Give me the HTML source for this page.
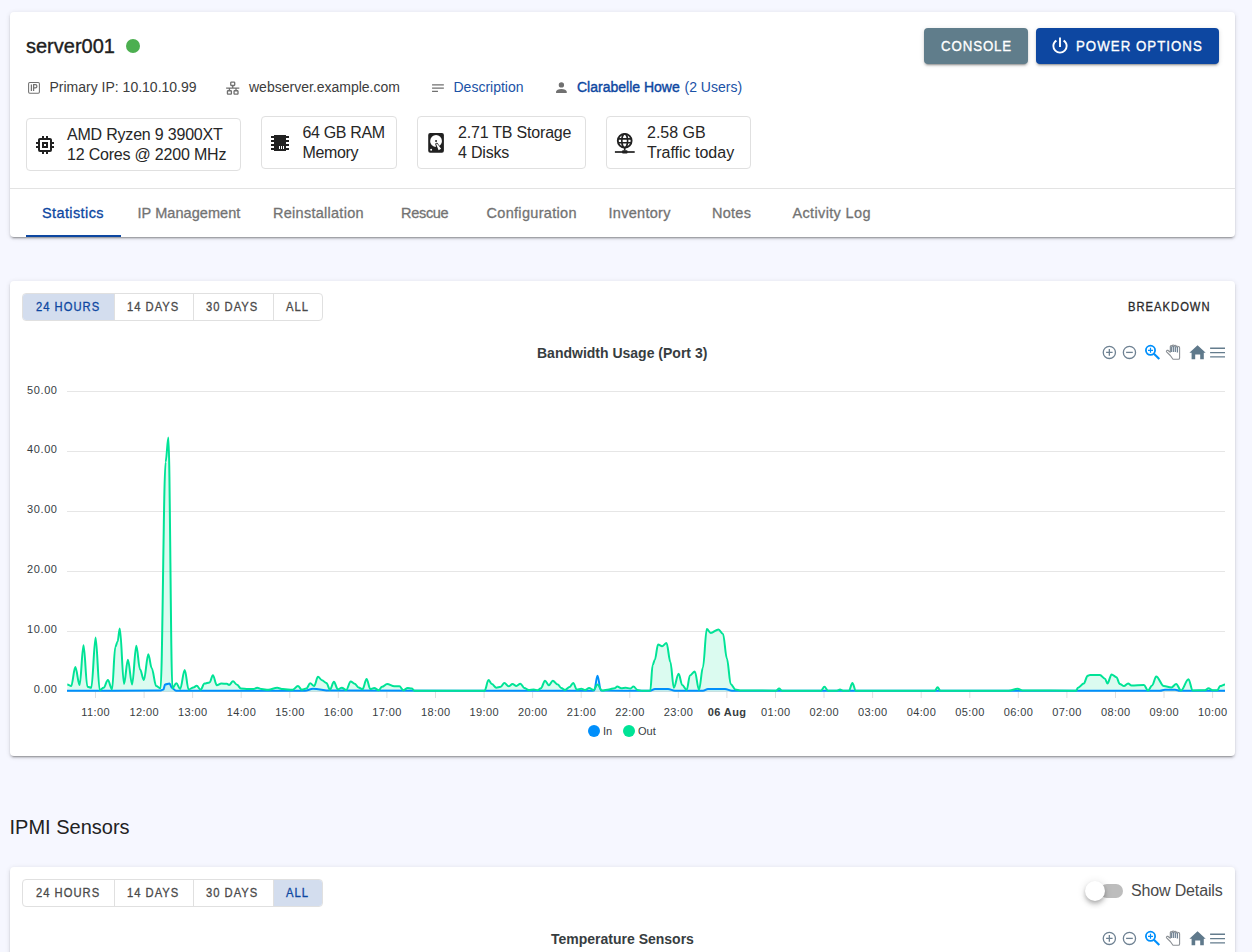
<!DOCTYPE html>
<html><head><meta charset="utf-8">
<style>
html,body{margin:0;padding:0}
body{width:1252px;height:952px;overflow:hidden;position:relative;background:#f6f7ff;font-family:"Liberation Sans",sans-serif;color:#212121}
.card{position:absolute;background:#fff;border-radius:4px;box-shadow:0 3px 1px -2px rgba(0,0,0,.2),0 2px 2px 0 rgba(0,0,0,.14),0 1px 5px 0 rgba(0,0,0,.12)}
.t{position:absolute;line-height:1;white-space:nowrap}
.ic{position:absolute}
.box{position:absolute;border:1px solid #e0e0e0;border-radius:4px;box-sizing:border-box;background:#fff}
.tab{position:absolute;top:206px;font-size:14.5px;color:#737373;line-height:1;white-space:nowrap;-webkit-text-stroke:0.3px currentColor}
.btn{position:absolute;border-radius:4px;color:#fff;box-shadow:0 3px 1px -2px rgba(0,0,0,.2),0 2px 2px 0 rgba(0,0,0,.14),0 1px 5px 0 rgba(0,0,0,.12)}
.grp{position:absolute;border:1px solid #e0e0e0;border-radius:4px;box-sizing:border-box;overflow:hidden}
.gb{position:absolute;top:0;bottom:0;box-sizing:border-box}
.gt{position:absolute;font-size:12px;letter-spacing:1.07px;line-height:1;white-space:nowrap;color:#4a4a4a;-webkit-text-stroke:0.3px currentColor;transform:scaleX(0.935);transform-origin:0 0}
</style></head>
<body>
<!-- CARD 1 -->
<div class="card" style="left:10px;top:12px;width:1225px;height:225px"></div>
<div class="t" style="left:26px;top:36px;font-size:20px;color:#202020;-webkit-text-stroke:0.35px currentColor">server001</div>
<div class="ic" style="left:126px;top:39px;width:14px;height:14px;border-radius:50%;background:#4caf50"></div>

<div class="btn" style="left:924px;top:28px;width:104px;height:36px;background:#607d8b"></div>
<div class="t" style="left:941px;top:38.3px;font-size:15px;letter-spacing:1.0px;color:#fff;-webkit-text-stroke:0.35px #fff;transform:scaleX(0.885);transform-origin:0 0">CONSOLE</div>
<div class="btn" style="left:1036px;top:28px;width:183px;height:36px;background:#0d47a1"></div>
<div class="t" style="left:1076px;top:38.3px;font-size:15px;letter-spacing:1.15px;color:#fff;-webkit-text-stroke:0.35px #fff;transform:scaleX(0.885);transform-origin:0 0">POWER OPTIONS</div>

<div class="t" style="left:49.5px;top:80px;font-size:14px;color:#3c3c3c">Primary IP: 10.10.10.99</div>
<div class="t" style="left:249px;top:80px;font-size:14px;color:#3c3c3c">webserver.example.com</div>
<div class="t" style="left:453.5px;top:80px;font-size:14px;color:#1a52a6">Description</div>
<div class="t" style="left:577px;top:80px;font-size:14px;color:#0d47a1;-webkit-text-stroke:0.4px currentColor">Clarabelle Howe</div>
<div class="t" style="left:684.5px;top:80px;font-size:14px;color:#1a52a6">(2 Users)</div>

<div class="box" style="left:26px;top:118px;width:215px;height:53px"></div>
<div class="t" style="left:67px;top:125px;font-size:16px;color:#262626;line-height:20px;letter-spacing:-0.2px">AMD Ryzen 9 3900XT<br>12 Cores @ 2200 MHz</div>
<div class="box" style="left:261px;top:116px;width:136px;height:53px"></div>
<div class="t" style="left:302.5px;top:123px;font-size:16px;color:#262626;line-height:20px;letter-spacing:-0.35px">64 GB RAM<br>Memory</div>
<div class="box" style="left:417px;top:116px;width:169px;height:53px"></div>
<div class="t" style="left:458px;top:123px;font-size:16px;color:#262626;line-height:20px;letter-spacing:-0.2px">2.71 TB Storage<br>4 Disks</div>
<div class="box" style="left:606px;top:116px;width:145px;height:53px"></div>
<div class="t" style="left:647px;top:123px;font-size:16px;color:#262626;line-height:20px">2.58 GB<br>Traffic today</div>

<div class="ic" style="left:10px;top:188px;width:1225px;height:1px;background:#e3e3e3"></div>
<div class="tab" style="left:42px;color:#0d47a1;letter-spacing:0.39px">Statistics</div>
<div class="ic" style="left:26px;top:235px;width:95px;height:2px;background:#0d47a1"></div>
<div class="tab" style="left:137.5px;letter-spacing:0.06px">IP Management</div>
<div class="tab" style="left:273px;letter-spacing:0.27px">Reinstallation</div>
<div class="tab" style="left:401px;letter-spacing:-0.3px">Rescue</div>
<div class="tab" style="left:486.5px;letter-spacing:0.31px">Configuration</div>
<div class="tab" style="left:608.5px;letter-spacing:0.29px">Inventory</div>
<div class="tab" style="left:712px;letter-spacing:0.27px">Notes</div>
<div class="tab" style="left:792.5px;letter-spacing:0.35px">Activity Log</div>

<!-- CARD 2 -->
<div class="card" style="left:10px;top:281px;width:1225px;height:475px"></div>
<div class="grp" style="left:22px;top:293px;width:301px;height:28px">
  <div class="gb" style="left:0;width:92px;background:#d3ddee"></div>
  <div class="gb" style="left:91px;width:80px;border-left:1px solid #e0e0e0"></div>
  <div class="gb" style="left:170px;width:80px;border-left:1px solid #e0e0e0"></div>
  <div class="gb" style="left:250px;width:50px;border-left:1px solid #e0e0e0"></div>
</div>
<div class="gt" style="left:36px;top:301px;color:#0d47a1">24 HOURS</div>
<div class="gt" style="left:127px;top:301px">14 DAYS</div>
<div class="gt" style="left:206px;top:301px">30 DAYS</div>
<div class="gt" style="left:286px;top:301px">ALL</div>
<div class="gt" style="left:1128px;top:301px;color:#2a2a2a">BREAKDOWN</div>

<div class="t" style="left:537px;top:345.5px;font-size:14px;font-weight:bold;color:#373d3f">Bandwidth Usage (Port 3)</div>

<!-- CHART -->
<svg class="ic" style="left:0;top:0;font-family:'Liberation Sans',sans-serif" width="1252" height="952" id="chart"><line x1="67" y1="391.5" x2="1225" y2="391.5" stroke="#e6e6e6" stroke-width="1"/><line x1="67" y1="451.5" x2="1225" y2="451.5" stroke="#e6e6e6" stroke-width="1"/><line x1="67" y1="511.5" x2="1225" y2="511.5" stroke="#e6e6e6" stroke-width="1"/><line x1="67" y1="571.5" x2="1225" y2="571.5" stroke="#e6e6e6" stroke-width="1"/><line x1="67" y1="631.5" x2="1225" y2="631.5" stroke="#e6e6e6" stroke-width="1"/><line x1="67" y1="691.5" x2="1225" y2="691.5" stroke="#e6e6e6" stroke-width="1"/><text x="57.6" y="393.6" text-anchor="end" font-size="11" fill="#373d3f" letter-spacing="0.6">50.00</text><text x="57.6" y="452.9" text-anchor="end" font-size="11" fill="#373d3f" letter-spacing="0.6">40.00</text><text x="57.6" y="512.8" text-anchor="end" font-size="11" fill="#373d3f" letter-spacing="0.6">30.00</text><text x="57.6" y="572.6" text-anchor="end" font-size="11" fill="#373d3f" letter-spacing="0.6">20.00</text><text x="57.6" y="632.8" text-anchor="end" font-size="11" fill="#373d3f" letter-spacing="0.6">10.00</text><text x="57.6" y="692.6" text-anchor="end" font-size="11" fill="#373d3f" letter-spacing="0.6">0.00</text><line x1="95.5" y1="692" x2="95.5" y2="698" stroke="#e0e0e0"/><text x="95.7" y="715.5" text-anchor="middle" font-size="11" fill="#373d3f" letter-spacing="0.4">11:00</text><line x1="144.1" y1="692" x2="144.1" y2="698" stroke="#e0e0e0"/><text x="144.3" y="715.5" text-anchor="middle" font-size="11" fill="#373d3f" letter-spacing="0.4">12:00</text><line x1="192.6" y1="692" x2="192.6" y2="698" stroke="#e0e0e0"/><text x="192.8" y="715.5" text-anchor="middle" font-size="11" fill="#373d3f" letter-spacing="0.4">13:00</text><line x1="241.2" y1="692" x2="241.2" y2="698" stroke="#e0e0e0"/><text x="241.4" y="715.5" text-anchor="middle" font-size="11" fill="#373d3f" letter-spacing="0.4">14:00</text><line x1="289.8" y1="692" x2="289.8" y2="698" stroke="#e0e0e0"/><text x="290.0" y="715.5" text-anchor="middle" font-size="11" fill="#373d3f" letter-spacing="0.4">15:00</text><line x1="338.3" y1="692" x2="338.3" y2="698" stroke="#e0e0e0"/><text x="338.5" y="715.5" text-anchor="middle" font-size="11" fill="#373d3f" letter-spacing="0.4">16:00</text><line x1="386.9" y1="692" x2="386.9" y2="698" stroke="#e0e0e0"/><text x="387.1" y="715.5" text-anchor="middle" font-size="11" fill="#373d3f" letter-spacing="0.4">17:00</text><line x1="435.5" y1="692" x2="435.5" y2="698" stroke="#e0e0e0"/><text x="435.7" y="715.5" text-anchor="middle" font-size="11" fill="#373d3f" letter-spacing="0.4">18:00</text><line x1="484.1" y1="692" x2="484.1" y2="698" stroke="#e0e0e0"/><text x="484.3" y="715.5" text-anchor="middle" font-size="11" fill="#373d3f" letter-spacing="0.4">19:00</text><line x1="532.6" y1="692" x2="532.6" y2="698" stroke="#e0e0e0"/><text x="532.8" y="715.5" text-anchor="middle" font-size="11" fill="#373d3f" letter-spacing="0.4">20:00</text><line x1="581.2" y1="692" x2="581.2" y2="698" stroke="#e0e0e0"/><text x="581.4" y="715.5" text-anchor="middle" font-size="11" fill="#373d3f" letter-spacing="0.4">21:00</text><line x1="629.8" y1="692" x2="629.8" y2="698" stroke="#e0e0e0"/><text x="630.0" y="715.5" text-anchor="middle" font-size="11" fill="#373d3f" letter-spacing="0.4">22:00</text><line x1="678.3" y1="692" x2="678.3" y2="698" stroke="#e0e0e0"/><text x="678.5" y="715.5" text-anchor="middle" font-size="11" fill="#373d3f" letter-spacing="0.4">23:00</text><line x1="726.9" y1="692" x2="726.9" y2="698" stroke="#e0e0e0"/><text x="727.1" y="715.5" text-anchor="middle" font-size="11" fill="#373d3f" letter-spacing="0.4" font-weight="bold">06 Aug</text><line x1="775.5" y1="692" x2="775.5" y2="698" stroke="#e0e0e0"/><text x="775.7" y="715.5" text-anchor="middle" font-size="11" fill="#373d3f" letter-spacing="0.4">01:00</text><line x1="824.0" y1="692" x2="824.0" y2="698" stroke="#e0e0e0"/><text x="824.2" y="715.5" text-anchor="middle" font-size="11" fill="#373d3f" letter-spacing="0.4">02:00</text><line x1="872.6" y1="692" x2="872.6" y2="698" stroke="#e0e0e0"/><text x="872.8" y="715.5" text-anchor="middle" font-size="11" fill="#373d3f" letter-spacing="0.4">03:00</text><line x1="921.2" y1="692" x2="921.2" y2="698" stroke="#e0e0e0"/><text x="921.4" y="715.5" text-anchor="middle" font-size="11" fill="#373d3f" letter-spacing="0.4">04:00</text><line x1="969.8" y1="692" x2="969.8" y2="698" stroke="#e0e0e0"/><text x="970.0" y="715.5" text-anchor="middle" font-size="11" fill="#373d3f" letter-spacing="0.4">05:00</text><line x1="1018.3" y1="692" x2="1018.3" y2="698" stroke="#e0e0e0"/><text x="1018.5" y="715.5" text-anchor="middle" font-size="11" fill="#373d3f" letter-spacing="0.4">06:00</text><line x1="1066.9" y1="692" x2="1066.9" y2="698" stroke="#e0e0e0"/><text x="1067.1" y="715.5" text-anchor="middle" font-size="11" fill="#373d3f" letter-spacing="0.4">07:00</text><line x1="1115.5" y1="692" x2="1115.5" y2="698" stroke="#e0e0e0"/><text x="1115.7" y="715.5" text-anchor="middle" font-size="11" fill="#373d3f" letter-spacing="0.4">08:00</text><line x1="1164.0" y1="692" x2="1164.0" y2="698" stroke="#e0e0e0"/><text x="1164.2" y="715.5" text-anchor="middle" font-size="11" fill="#373d3f" letter-spacing="0.4">09:00</text><line x1="1212.6" y1="692" x2="1212.6" y2="698" stroke="#e0e0e0"/><text x="1212.8" y="715.5" text-anchor="middle" font-size="11" fill="#373d3f" letter-spacing="0.4">10:00</text><path d="M67.0,690.8 C99.5,690.8 127.5,690.6 160.0,690.6 C161.2,690.6 162.3,689.5 163.5,689.5 C164.0,689.5 164.5,684.5 165.0,684.5 C166.6,684.5 167.9,683.5 169.5,683.5 C170.4,683.5 171.1,688.0 172.0,688.0 C173.4,688.0 174.6,690.8 176.0,690.8 C221.2,690.8 259.9,690.8 305.0,690.8 C307.8,690.8 310.2,688.8 313.0,688.8 C318.9,688.8 324.1,690.6 330.0,690.6 C421.0,690.6 499.0,690.8 590.0,690.8 C591.5,690.8 592.7,690.6 594.2,690.6 C595.4,690.6 596.3,675.8 597.5,675.8 C598.7,675.8 599.7,690.6 600.9,690.6 C618.1,690.6 632.8,690.8 650.0,690.8 C651.8,690.8 653.2,689.0 655.0,689.0 C659.5,689.0 663.5,689.0 668.0,689.0 C670.5,689.0 672.5,690.8 675.0,690.8 C684.8,690.8 693.2,690.8 703.0,690.8 C704.8,690.8 706.2,689.0 708.0,689.0 C714.0,689.0 719.0,689.0 725.0,689.0 C727.5,689.0 729.5,690.8 732.0,690.8 C881.8,690.8 1010.2,690.8 1160.0,690.8 C1161.8,690.8 1163.2,689.8 1165.0,689.8 C1168.5,689.8 1171.5,689.8 1175.0,689.8 C1176.8,689.8 1178.2,690.8 1180.0,690.8 C1195.8,690.8 1209.2,690.8 1225.0,690.8 L1225.0,691.5 L67.0,691.5 Z" fill="#008ffb" fill-opacity="0.12"/><path d="M67.3,684.4 C68.7,684.4 69.8,686.1 71.2,686.1 C72.6,686.1 73.9,667.1 75.3,667.1 C76.8,667.1 78.1,685.0 79.6,685.0 C81.0,685.0 82.1,645.3 83.5,645.3 C84.9,645.3 86.0,686.7 87.4,686.7 C88.8,686.7 89.9,687.8 91.3,687.8 C92.8,687.8 94.1,637.5 95.6,637.5 C97.0,637.5 98.3,690.0 99.7,690.0 C101.1,690.0 102.2,687.8 103.6,687.8 C105.1,687.8 106.4,680.0 107.9,680.0 C109.3,680.0 110.6,689.5 112.0,689.5 C113.2,689.5 114.1,647.0 115.3,647.0 C116.1,647.0 116.8,641.4 117.6,641.4 C118.4,641.4 119.0,628.5 119.8,628.5 C121.3,628.5 122.5,683.9 124.0,683.9 C125.4,683.9 126.5,659.8 127.9,659.8 C129.4,659.8 130.6,684.4 132.1,684.4 C133.6,684.4 134.8,645.8 136.3,645.8 C137.6,645.8 138.7,669.3 140.0,669.3 C141.4,669.3 142.5,680.0 143.9,680.0 C145.4,680.0 146.8,654.2 148.3,654.2 C149.5,654.2 150.5,668.2 151.7,668.2 C153.3,668.2 154.6,686.1 156.2,686.1 C157.7,686.1 159.1,688.3 160.6,688.3 C162.3,688.3 163.8,462.0 165.6,462.0 C166.6,462.0 167.4,437.5 168.4,437.5 C169.8,437.5 171.0,688.3 172.4,688.3 C173.8,688.3 174.9,683.3 176.3,683.3 C177.7,683.3 178.8,688.9 180.2,688.9 C181.8,688.9 183.1,669.9 184.7,669.9 C186.1,669.9 187.2,689.5 188.6,689.5 C190.3,689.5 191.7,687.5 193.4,687.5 C194.6,687.5 195.5,685.8 196.7,685.8 C198.1,685.8 199.2,689.7 200.6,689.7 C202.0,689.7 203.1,683.5 204.5,683.5 C206.3,683.5 207.8,682.4 209.6,682.4 C210.8,682.4 211.7,675.2 212.9,675.2 C214.3,675.2 215.4,685.2 216.8,685.2 C218.4,685.2 219.7,683.5 221.3,683.5 C223.3,683.5 224.9,683.8 226.9,683.8 C227.7,683.8 228.3,684.9 229.1,684.9 C230.5,684.9 231.6,681.3 233.0,681.3 C234.4,681.3 235.6,684.7 237.0,684.7 C238.4,684.7 239.5,688.6 240.9,688.6 C243.4,688.6 245.6,689.1 248.1,689.1 C250.1,689.1 251.7,689.1 253.7,689.1 C254.9,689.1 255.9,687.8 257.1,687.8 C258.7,687.8 260.0,689.1 261.6,689.1 C263.9,689.1 266.0,689.7 268.3,689.7 C271.4,689.7 274.1,687.8 277.2,687.8 C279.2,687.8 280.8,689.1 282.8,689.1 C286.3,689.1 289.4,689.7 292.9,689.7 C294.6,689.7 296.1,686.0 297.9,686.0 C299.3,686.0 300.4,689.7 301.8,689.7 C303.4,689.7 304.7,688.6 306.3,688.6 C307.7,688.6 308.8,683.3 310.2,683.3 C311.6,683.3 312.7,686.0 314.1,686.0 C315.5,686.0 316.6,676.8 318.0,676.8 C319.4,676.8 320.6,680.2 322.0,680.2 C323.5,680.2 324.9,683.0 326.4,683.0 C327.7,683.0 328.7,689.6 330.0,689.6 C331.4,689.6 332.5,681.8 333.9,681.8 C335.3,681.8 336.5,689.3 337.9,689.3 C339.3,689.3 340.4,687.7 341.8,687.7 C343.3,687.7 344.7,690.0 346.2,690.0 C347.8,690.0 349.1,681.5 350.7,681.5 C352.1,681.5 353.2,683.7 354.6,683.7 C356.0,683.7 357.1,687.4 358.5,687.4 C359.9,687.4 361.1,689.3 362.5,689.3 C363.9,689.3 365.2,679.0 366.6,679.0 C367.9,679.0 369.0,689.1 370.3,689.1 C371.7,689.1 372.8,688.0 374.2,688.0 C375.8,688.0 377.1,690.2 378.7,690.2 C379.9,690.2 380.8,686.8 382.0,686.8 C383.8,686.8 385.3,684.0 387.1,684.0 C389.6,684.0 391.8,686.3 394.3,686.3 C396.1,686.3 397.6,686.3 399.4,686.3 C400.8,686.3 401.9,690.2 403.3,690.2 C404.8,690.2 406.2,688.0 407.7,688.0 C409.1,688.0 410.3,688.5 411.7,688.5 C412.7,688.5 413.5,690.7 414.5,690.7 C439.0,690.7 460.1,690.7 484.6,690.7 C486.0,690.7 487.1,680.1 488.5,680.1 C489.7,680.1 490.6,684.0 491.8,684.0 C493.4,684.0 494.7,687.7 496.3,687.7 C497.9,687.7 499.2,686.8 500.8,686.8 C502.1,686.8 503.1,682.9 504.4,682.9 C505.9,682.9 507.1,686.3 508.6,686.3 C510.0,686.3 511.1,684.0 512.5,684.0 C513.9,684.0 515.0,686.0 516.4,686.0 C517.8,686.0 519.0,683.7 520.4,683.7 C521.8,683.7 522.9,688.0 524.3,688.0 C525.8,688.0 527.2,690.0 528.7,690.0 C530.5,690.0 532.0,689.6 533.8,689.6 C535.2,689.6 536.3,690.2 537.7,690.2 C538.9,690.2 539.8,688.2 541.0,688.2 C542.4,688.2 543.6,680.7 545.0,680.7 C546.4,680.7 547.5,685.2 548.9,685.2 C550.3,685.2 551.4,680.7 552.8,680.7 C554.5,680.7 556.0,684.6 557.8,684.6 C559.0,684.6 560.0,688.0 561.2,688.0 C562.6,688.0 563.7,690.0 565.1,690.0 C566.6,690.0 568.0,687.1 569.5,687.1 C570.8,687.1 571.9,682.9 573.2,682.9 C574.5,682.9 575.5,689.6 576.8,689.6 C578.4,689.6 579.7,688.8 581.3,688.8 C582.7,688.8 583.8,690.0 585.2,690.0 C586.6,690.0 587.7,688.0 589.1,688.0 C590.7,688.0 592.0,690.0 593.6,690.0 C595.0,690.0 596.1,684.6 597.5,684.6 C599.1,684.6 600.4,690.6 602.0,690.6 C604.4,690.6 606.5,689.4 608.9,689.4 C610.9,689.4 612.5,688.2 614.5,688.2 C615.5,688.2 616.3,686.6 617.3,686.6 C618.7,686.6 619.8,688.2 621.2,688.2 C622.8,688.2 624.1,687.7 625.7,687.7 C627.3,687.7 628.6,688.6 630.2,688.6 C631.4,688.6 632.3,686.6 633.5,686.6 C634.9,686.6 636.1,689.9 637.5,689.9 C639.2,689.9 640.8,690.8 642.5,690.8 C645.2,690.8 647.6,690.5 650.3,690.5 C651.1,690.5 651.8,665.3 652.6,665.3 C653.4,665.3 654.0,659.7 654.8,659.7 C656.0,659.7 656.9,644.6 658.1,644.6 C659.5,644.6 660.7,646.3 662.1,646.3 C663.6,646.3 665.0,643.0 666.5,643.0 C667.9,643.0 669.0,662.0 670.4,662.0 C671.6,662.0 672.6,687.7 673.8,687.7 C675.5,687.7 676.9,673.7 678.6,673.7 C679.9,673.7 680.9,684.9 682.2,684.9 C683.8,684.9 685.1,689.9 686.7,689.9 C687.9,689.9 688.8,675.4 690.0,675.4 C691.7,675.4 693.1,671.5 694.8,671.5 C696.3,671.5 697.5,689.9 699.0,689.9 C700.4,689.9 701.5,667.6 702.9,667.6 C704.3,667.6 705.4,629.0 706.8,629.0 C708.2,629.0 709.3,632.9 710.7,632.9 C713.4,632.9 715.8,629.5 718.5,629.5 C720.1,629.5 721.4,634.0 723.0,634.0 C724.4,634.0 725.5,658.6 726.9,658.6 C728.3,658.6 729.4,684.3 730.8,684.3 C732.4,684.3 733.7,689.4 735.3,689.4 C736.9,689.4 738.4,690.4 740.0,690.4 C752.6,690.4 763.4,690.7 776.0,690.7 C777.1,690.7 778.0,688.5 779.1,688.5 C780.1,688.5 781.0,690.7 782.0,690.7 C795.6,690.7 807.4,690.7 821.0,690.7 C822.2,690.7 823.2,686.8 824.4,686.8 C825.7,686.8 826.7,690.7 828.0,690.7 C831.1,690.7 833.9,690.7 837.0,690.7 C838.0,690.7 839.0,689.6 840.0,689.6 C841.0,689.6 842.0,690.7 843.0,690.7 C845.1,690.7 846.9,690.7 849.0,690.7 C850.2,690.7 851.2,682.9 852.4,682.9 C853.6,682.9 854.5,690.7 855.7,690.7 C883.4,690.7 907.1,690.7 934.8,690.7 C935.8,690.7 936.6,687.2 937.6,687.2 C938.6,687.2 939.4,690.7 940.4,690.7 C964.3,690.7 984.7,690.7 1008.6,690.7 C1011.8,690.7 1014.5,688.8 1017.7,688.8 C1019.4,688.8 1020.8,690.5 1022.5,690.5 C1041.3,690.5 1057.3,690.7 1076.1,690.7 C1076.8,690.7 1077.3,687.8 1078.0,687.8 C1080.0,687.8 1081.8,683.5 1083.8,683.5 C1085.1,683.5 1086.3,675.8 1087.6,675.8 C1088.4,675.8 1089.2,674.9 1090.0,674.9 C1093.5,674.9 1096.4,675.1 1099.9,675.1 C1101.7,675.1 1103.2,678.7 1104.9,678.7 C1105.8,678.7 1106.6,683.4 1107.5,683.4 C1108.9,683.4 1110.2,674.4 1111.6,674.4 C1113.3,674.4 1114.7,677.2 1116.4,677.2 C1117.6,677.2 1118.6,684.0 1119.8,684.0 C1121.3,684.0 1122.5,686.1 1124.0,686.1 C1125.4,686.1 1126.7,683.4 1128.1,683.4 C1129.3,683.4 1130.3,685.4 1131.5,685.4 C1135.8,685.4 1139.6,685.0 1143.9,685.0 C1145.3,685.0 1146.6,690.5 1148.0,690.5 C1149.4,690.5 1150.7,685.4 1152.1,685.4 C1153.5,685.4 1154.8,676.5 1156.2,676.5 C1158.9,676.5 1161.1,686.1 1163.8,686.1 C1166.5,686.1 1168.7,687.5 1171.4,687.5 C1173.1,687.5 1174.5,684.0 1176.2,684.0 C1177.9,684.0 1179.3,690.5 1181.0,690.5 C1183.6,690.5 1185.9,679.2 1188.5,679.2 C1189.9,679.2 1191.2,690.5 1192.6,690.5 C1196.9,690.5 1200.7,690.2 1205.0,690.2 C1206.2,690.2 1207.3,688.2 1208.5,688.2 C1209.9,688.2 1211.2,690.2 1212.6,690.2 C1214.3,690.2 1215.7,690.2 1217.4,690.2 C1218.3,690.2 1219.2,686.1 1220.1,686.1 C1221.8,686.1 1223.3,684.5 1225.0,684.5 L1225.0,691.5 L67.3,691.5 Z" fill="#00e396" fill-opacity="0.14"/><path d="M67.0,690.8 C99.5,690.8 127.5,690.6 160.0,690.6 C161.2,690.6 162.3,689.5 163.5,689.5 C164.0,689.5 164.5,684.5 165.0,684.5 C166.6,684.5 167.9,683.5 169.5,683.5 C170.4,683.5 171.1,688.0 172.0,688.0 C173.4,688.0 174.6,690.8 176.0,690.8 C221.2,690.8 259.9,690.8 305.0,690.8 C307.8,690.8 310.2,688.8 313.0,688.8 C318.9,688.8 324.1,690.6 330.0,690.6 C421.0,690.6 499.0,690.8 590.0,690.8 C591.5,690.8 592.7,690.6 594.2,690.6 C595.4,690.6 596.3,675.8 597.5,675.8 C598.7,675.8 599.7,690.6 600.9,690.6 C618.1,690.6 632.8,690.8 650.0,690.8 C651.8,690.8 653.2,689.0 655.0,689.0 C659.5,689.0 663.5,689.0 668.0,689.0 C670.5,689.0 672.5,690.8 675.0,690.8 C684.8,690.8 693.2,690.8 703.0,690.8 C704.8,690.8 706.2,689.0 708.0,689.0 C714.0,689.0 719.0,689.0 725.0,689.0 C727.5,689.0 729.5,690.8 732.0,690.8 C881.8,690.8 1010.2,690.8 1160.0,690.8 C1161.8,690.8 1163.2,689.8 1165.0,689.8 C1168.5,689.8 1171.5,689.8 1175.0,689.8 C1176.8,689.8 1178.2,690.8 1180.0,690.8 C1195.8,690.8 1209.2,690.8 1225.0,690.8" fill="none" stroke="#008ffb" stroke-width="2" stroke-linejoin="round"/><path d="M67.3,684.4 C68.7,684.4 69.8,686.1 71.2,686.1 C72.6,686.1 73.9,667.1 75.3,667.1 C76.8,667.1 78.1,685.0 79.6,685.0 C81.0,685.0 82.1,645.3 83.5,645.3 C84.9,645.3 86.0,686.7 87.4,686.7 C88.8,686.7 89.9,687.8 91.3,687.8 C92.8,687.8 94.1,637.5 95.6,637.5 C97.0,637.5 98.3,690.0 99.7,690.0 C101.1,690.0 102.2,687.8 103.6,687.8 C105.1,687.8 106.4,680.0 107.9,680.0 C109.3,680.0 110.6,689.5 112.0,689.5 C113.2,689.5 114.1,647.0 115.3,647.0 C116.1,647.0 116.8,641.4 117.6,641.4 C118.4,641.4 119.0,628.5 119.8,628.5 C121.3,628.5 122.5,683.9 124.0,683.9 C125.4,683.9 126.5,659.8 127.9,659.8 C129.4,659.8 130.6,684.4 132.1,684.4 C133.6,684.4 134.8,645.8 136.3,645.8 C137.6,645.8 138.7,669.3 140.0,669.3 C141.4,669.3 142.5,680.0 143.9,680.0 C145.4,680.0 146.8,654.2 148.3,654.2 C149.5,654.2 150.5,668.2 151.7,668.2 C153.3,668.2 154.6,686.1 156.2,686.1 C157.7,686.1 159.1,688.3 160.6,688.3 C162.3,688.3 163.8,462.0 165.6,462.0 C166.6,462.0 167.4,437.5 168.4,437.5 C169.8,437.5 171.0,688.3 172.4,688.3 C173.8,688.3 174.9,683.3 176.3,683.3 C177.7,683.3 178.8,688.9 180.2,688.9 C181.8,688.9 183.1,669.9 184.7,669.9 C186.1,669.9 187.2,689.5 188.6,689.5 C190.3,689.5 191.7,687.5 193.4,687.5 C194.6,687.5 195.5,685.8 196.7,685.8 C198.1,685.8 199.2,689.7 200.6,689.7 C202.0,689.7 203.1,683.5 204.5,683.5 C206.3,683.5 207.8,682.4 209.6,682.4 C210.8,682.4 211.7,675.2 212.9,675.2 C214.3,675.2 215.4,685.2 216.8,685.2 C218.4,685.2 219.7,683.5 221.3,683.5 C223.3,683.5 224.9,683.8 226.9,683.8 C227.7,683.8 228.3,684.9 229.1,684.9 C230.5,684.9 231.6,681.3 233.0,681.3 C234.4,681.3 235.6,684.7 237.0,684.7 C238.4,684.7 239.5,688.6 240.9,688.6 C243.4,688.6 245.6,689.1 248.1,689.1 C250.1,689.1 251.7,689.1 253.7,689.1 C254.9,689.1 255.9,687.8 257.1,687.8 C258.7,687.8 260.0,689.1 261.6,689.1 C263.9,689.1 266.0,689.7 268.3,689.7 C271.4,689.7 274.1,687.8 277.2,687.8 C279.2,687.8 280.8,689.1 282.8,689.1 C286.3,689.1 289.4,689.7 292.9,689.7 C294.6,689.7 296.1,686.0 297.9,686.0 C299.3,686.0 300.4,689.7 301.8,689.7 C303.4,689.7 304.7,688.6 306.3,688.6 C307.7,688.6 308.8,683.3 310.2,683.3 C311.6,683.3 312.7,686.0 314.1,686.0 C315.5,686.0 316.6,676.8 318.0,676.8 C319.4,676.8 320.6,680.2 322.0,680.2 C323.5,680.2 324.9,683.0 326.4,683.0 C327.7,683.0 328.7,689.6 330.0,689.6 C331.4,689.6 332.5,681.8 333.9,681.8 C335.3,681.8 336.5,689.3 337.9,689.3 C339.3,689.3 340.4,687.7 341.8,687.7 C343.3,687.7 344.7,690.0 346.2,690.0 C347.8,690.0 349.1,681.5 350.7,681.5 C352.1,681.5 353.2,683.7 354.6,683.7 C356.0,683.7 357.1,687.4 358.5,687.4 C359.9,687.4 361.1,689.3 362.5,689.3 C363.9,689.3 365.2,679.0 366.6,679.0 C367.9,679.0 369.0,689.1 370.3,689.1 C371.7,689.1 372.8,688.0 374.2,688.0 C375.8,688.0 377.1,690.2 378.7,690.2 C379.9,690.2 380.8,686.8 382.0,686.8 C383.8,686.8 385.3,684.0 387.1,684.0 C389.6,684.0 391.8,686.3 394.3,686.3 C396.1,686.3 397.6,686.3 399.4,686.3 C400.8,686.3 401.9,690.2 403.3,690.2 C404.8,690.2 406.2,688.0 407.7,688.0 C409.1,688.0 410.3,688.5 411.7,688.5 C412.7,688.5 413.5,690.7 414.5,690.7 C439.0,690.7 460.1,690.7 484.6,690.7 C486.0,690.7 487.1,680.1 488.5,680.1 C489.7,680.1 490.6,684.0 491.8,684.0 C493.4,684.0 494.7,687.7 496.3,687.7 C497.9,687.7 499.2,686.8 500.8,686.8 C502.1,686.8 503.1,682.9 504.4,682.9 C505.9,682.9 507.1,686.3 508.6,686.3 C510.0,686.3 511.1,684.0 512.5,684.0 C513.9,684.0 515.0,686.0 516.4,686.0 C517.8,686.0 519.0,683.7 520.4,683.7 C521.8,683.7 522.9,688.0 524.3,688.0 C525.8,688.0 527.2,690.0 528.7,690.0 C530.5,690.0 532.0,689.6 533.8,689.6 C535.2,689.6 536.3,690.2 537.7,690.2 C538.9,690.2 539.8,688.2 541.0,688.2 C542.4,688.2 543.6,680.7 545.0,680.7 C546.4,680.7 547.5,685.2 548.9,685.2 C550.3,685.2 551.4,680.7 552.8,680.7 C554.5,680.7 556.0,684.6 557.8,684.6 C559.0,684.6 560.0,688.0 561.2,688.0 C562.6,688.0 563.7,690.0 565.1,690.0 C566.6,690.0 568.0,687.1 569.5,687.1 C570.8,687.1 571.9,682.9 573.2,682.9 C574.5,682.9 575.5,689.6 576.8,689.6 C578.4,689.6 579.7,688.8 581.3,688.8 C582.7,688.8 583.8,690.0 585.2,690.0 C586.6,690.0 587.7,688.0 589.1,688.0 C590.7,688.0 592.0,690.0 593.6,690.0 C595.0,690.0 596.1,684.6 597.5,684.6 C599.1,684.6 600.4,690.6 602.0,690.6 C604.4,690.6 606.5,689.4 608.9,689.4 C610.9,689.4 612.5,688.2 614.5,688.2 C615.5,688.2 616.3,686.6 617.3,686.6 C618.7,686.6 619.8,688.2 621.2,688.2 C622.8,688.2 624.1,687.7 625.7,687.7 C627.3,687.7 628.6,688.6 630.2,688.6 C631.4,688.6 632.3,686.6 633.5,686.6 C634.9,686.6 636.1,689.9 637.5,689.9 C639.2,689.9 640.8,690.8 642.5,690.8 C645.2,690.8 647.6,690.5 650.3,690.5 C651.1,690.5 651.8,665.3 652.6,665.3 C653.4,665.3 654.0,659.7 654.8,659.7 C656.0,659.7 656.9,644.6 658.1,644.6 C659.5,644.6 660.7,646.3 662.1,646.3 C663.6,646.3 665.0,643.0 666.5,643.0 C667.9,643.0 669.0,662.0 670.4,662.0 C671.6,662.0 672.6,687.7 673.8,687.7 C675.5,687.7 676.9,673.7 678.6,673.7 C679.9,673.7 680.9,684.9 682.2,684.9 C683.8,684.9 685.1,689.9 686.7,689.9 C687.9,689.9 688.8,675.4 690.0,675.4 C691.7,675.4 693.1,671.5 694.8,671.5 C696.3,671.5 697.5,689.9 699.0,689.9 C700.4,689.9 701.5,667.6 702.9,667.6 C704.3,667.6 705.4,629.0 706.8,629.0 C708.2,629.0 709.3,632.9 710.7,632.9 C713.4,632.9 715.8,629.5 718.5,629.5 C720.1,629.5 721.4,634.0 723.0,634.0 C724.4,634.0 725.5,658.6 726.9,658.6 C728.3,658.6 729.4,684.3 730.8,684.3 C732.4,684.3 733.7,689.4 735.3,689.4 C736.9,689.4 738.4,690.4 740.0,690.4 C752.6,690.4 763.4,690.7 776.0,690.7 C777.1,690.7 778.0,688.5 779.1,688.5 C780.1,688.5 781.0,690.7 782.0,690.7 C795.6,690.7 807.4,690.7 821.0,690.7 C822.2,690.7 823.2,686.8 824.4,686.8 C825.7,686.8 826.7,690.7 828.0,690.7 C831.1,690.7 833.9,690.7 837.0,690.7 C838.0,690.7 839.0,689.6 840.0,689.6 C841.0,689.6 842.0,690.7 843.0,690.7 C845.1,690.7 846.9,690.7 849.0,690.7 C850.2,690.7 851.2,682.9 852.4,682.9 C853.6,682.9 854.5,690.7 855.7,690.7 C883.4,690.7 907.1,690.7 934.8,690.7 C935.8,690.7 936.6,687.2 937.6,687.2 C938.6,687.2 939.4,690.7 940.4,690.7 C964.3,690.7 984.7,690.7 1008.6,690.7 C1011.8,690.7 1014.5,688.8 1017.7,688.8 C1019.4,688.8 1020.8,690.5 1022.5,690.5 C1041.3,690.5 1057.3,690.7 1076.1,690.7 C1076.8,690.7 1077.3,687.8 1078.0,687.8 C1080.0,687.8 1081.8,683.5 1083.8,683.5 C1085.1,683.5 1086.3,675.8 1087.6,675.8 C1088.4,675.8 1089.2,674.9 1090.0,674.9 C1093.5,674.9 1096.4,675.1 1099.9,675.1 C1101.7,675.1 1103.2,678.7 1104.9,678.7 C1105.8,678.7 1106.6,683.4 1107.5,683.4 C1108.9,683.4 1110.2,674.4 1111.6,674.4 C1113.3,674.4 1114.7,677.2 1116.4,677.2 C1117.6,677.2 1118.6,684.0 1119.8,684.0 C1121.3,684.0 1122.5,686.1 1124.0,686.1 C1125.4,686.1 1126.7,683.4 1128.1,683.4 C1129.3,683.4 1130.3,685.4 1131.5,685.4 C1135.8,685.4 1139.6,685.0 1143.9,685.0 C1145.3,685.0 1146.6,690.5 1148.0,690.5 C1149.4,690.5 1150.7,685.4 1152.1,685.4 C1153.5,685.4 1154.8,676.5 1156.2,676.5 C1158.9,676.5 1161.1,686.1 1163.8,686.1 C1166.5,686.1 1168.7,687.5 1171.4,687.5 C1173.1,687.5 1174.5,684.0 1176.2,684.0 C1177.9,684.0 1179.3,690.5 1181.0,690.5 C1183.6,690.5 1185.9,679.2 1188.5,679.2 C1189.9,679.2 1191.2,690.5 1192.6,690.5 C1196.9,690.5 1200.7,690.2 1205.0,690.2 C1206.2,690.2 1207.3,688.2 1208.5,688.2 C1209.9,688.2 1211.2,690.2 1212.6,690.2 C1214.3,690.2 1215.7,690.2 1217.4,690.2 C1218.3,690.2 1219.2,686.1 1220.1,686.1 C1221.8,686.1 1223.3,684.5 1225.0,684.5" fill="none" stroke="#00e396" stroke-width="2" stroke-linejoin="round"/><circle cx="594" cy="731" r="6" fill="#008ffb"/><text x="603" y="734.8" font-size="11" fill="#373d3f">In</text><circle cx="629" cy="731" r="6" fill="#00e396"/><text x="638" y="734.8" font-size="11" fill="#373d3f">Out</text></svg>

<!-- IPMI -->
<div class="t" style="left:9.5px;top:817px;font-size:20px;color:#222">IPMI Sensors</div>
<div class="card" style="left:10px;top:867px;width:1225px;height:200px"></div>
<div class="grp" style="left:22px;top:879px;width:301px;height:28px">
  <div class="gb" style="left:0;width:92px"></div>
  <div class="gb" style="left:91px;width:80px;border-left:1px solid #e0e0e0"></div>
  <div class="gb" style="left:170px;width:80px;border-left:1px solid #e0e0e0"></div>
  <div class="gb" style="left:250px;width:50px;border-left:1px solid #e0e0e0;background:#d3ddee"></div>
</div>
<div class="gt" style="left:36px;top:887px">24 HOURS</div>
<div class="gt" style="left:127px;top:887px">14 DAYS</div>
<div class="gt" style="left:206px;top:887px">30 DAYS</div>
<div class="gt" style="left:286px;top:887px;color:#0d47a1">ALL</div>
<div class="ic" style="left:1100px;top:884px;width:23px;height:14px;border-radius:7px;background:#bdbdbd"></div>
<div class="ic" style="left:1085px;top:881px;width:20px;height:20px;border-radius:50%;background:#fff;box-shadow:0 2px 4px -1px rgba(0,0,0,.2),0 4px 5px 0 rgba(0,0,0,.14),0 1px 10px 0 rgba(0,0,0,.12)"></div>
<div class="t" style="left:1131px;top:882.5px;font-size:16px;color:#4a4a4a;letter-spacing:-0.15px">Show Details</div>
<div class="t" style="left:551px;top:932px;font-size:14px;font-weight:bold;color:#373d3f">Temperature Sensors</div>
<svg class="ic" style="left:0;top:0" width="1252" height="952" id="icons"><rect x="28.6" y="82.5" width="10.8" height="10.8" rx="1.2" fill="none" stroke="#707070" stroke-width="1.05"/><path d="M31.4,84.4V90.9 M33.6,90.9V84.7H35.4Q36.9,84.7 36.9,86.3Q36.9,87.9 35.4,87.9H33.6" fill="none" stroke="#707070" stroke-width="1.25"/><path transform="translate(224.8,80.2) scale(0.66)" d="M10,2C8.89,2 8,2.89 8,4V7C8,8.11 8.89,9 10,9H11V11H2V13H6V15H5C3.89,15 3,15.89 3,17V20C3,21.11 3.89,22 5,22H9C10.11,22 11,21.11 11,20V17C11,15.89 10.11,15 9,15H8V13H16V15H15C13.89,15 13,15.89 13,17V20C13,21.11 13.89,22 15,22H19C20.11,22 21,21.11 21,20V17C21,15.89 20.11,15 19,15H18V13H22V11H13V9H14C15.11,9 16,8.11 16,7V4C16,2.89 15.11,2 14,2H10M10,4H14V7H10V4M5,17H9V20H5V17M15,17H19V20H15V17Z" fill="#707070"/><path transform="translate(430.1,80.2) scale(0.655)" d="M21,6V8H3V6H21M3,18H12V16H3V18M3,13H21V11H3V13Z" fill="#707070"/><path transform="translate(553.4,79.6) scale(0.667)" d="M12,4A4,4 0 0,1 16,8A4,4 0 0,1 12,12A4,4 0 0,1 8,8A4,4 0 0,1 12,4M12,14C16.42,14 20,15.79 20,18V20H4V18C4,15.79 7.58,14 12,14Z" fill="#707070"/><path transform="translate(1048.6,34.6) scale(0.95)" d="M16.56,5.44L15.11,6.89C16.84,7.94 18,9.83 18,12A6,6 0 0,1 12,18A6,6 0 0,1 6,12C6,9.83 7.16,7.94 8.88,6.88L7.44,5.44C5.36,6.88 4,9.28 4,12A8,8 0 0,0 12,20A8,8 0 0,0 20,12C20,9.28 18.64,6.88 16.56,5.44M13,3H11V13H13" fill="#fff"/><path transform="translate(33,133)" d="M17,17H7V7H17M21,11V9H19V7C19,5.89 18.1,5 17,5H15V3H13V5H11V3H9V5H7C5.89,5 5,5.89 5,7V9H3V11H5V13H3V15H5V17A2,2 0 0,0 7,19H9V21H11V19H13V21H15V19H17A2,2 0 0,0 19,17V15H21V13H19V11M13,13H11V11H13M15,9H9V15H15V9Z" fill="#212121"/><path transform="translate(268,131)" d="M6,4H18V5H21V7H18V9H21V11H18V13H21V15H18V17H21V19H18V20H6V19H3V17H6V15H3V13H6V11H3V9H6V7H3V5H6V4M11,15V18H12V15H11M13,15V18H14V15H13M15,15V18H16V15H15Z" fill="#212121"/><path transform="translate(424.3,131.1) scale(0.98)" d="M6,2H18A2,2 0 0,1 20,4V20A2,2 0 0,1 18,22H6A2,2 0 0,1 4,20V4A2,2 0 0,1 6,2M12,4A6,6 0 0,0 6,10C6,13.31 8.69,16 12.1,16L11.22,13.77C10.95,13.29 11.13,12.7 11.6,12.43L12.46,11.93C12.94,11.66 13.530,11.83 13.8,12.31L15.25,14.9C16.94,13.85 18,12 18,10A6,6 0 0,0 12,4M12,9A1,1 0 0,1 13,10A1,1 0 0,1 12,11A1,1 0 0,1 11,10A1,1 0 0,1 12,9M7,18A1,1 0 0,0 6,19A1,1 0 0,0 7,20A1,1 0 0,0 8,19A1,1 0 0,0 7,18M12.09,13.27L14.58,19.58L17.17,18.08L12.95,12.77L12.09,13.27Z" fill="#212121"/><circle cx="624.7" cy="140.75" r="6.9" fill="none" stroke="#212121" stroke-width="1.9"/><ellipse cx="624.7" cy="140.75" rx="2.9" ry="6.9" fill="none" stroke="#212121" stroke-width="1.6"/><path d="M618.2,138.9H631.2M618.2,142.8H631.2M624.7,148V150.5" stroke="#212121" stroke-width="1.6"/><rect x="622.1" y="150.2" width="5.4" height="3.3" rx="0.8" fill="#212121"/><path d="M614.9,152H634.7" stroke="#212121" stroke-width="1.7"/><g transform="translate(0,0)"><circle cx="1109.35" cy="352.4" r="6.1" fill="none" stroke="#6e8192" stroke-width="1.3"/><path d="M1106.1,352.4H1112.6M1109.35,349.1V355.7" stroke="#6e8192" stroke-width="1.3"/><circle cx="1129.45" cy="352.4" r="6.1" fill="none" stroke="#6e8192" stroke-width="1.3"/><path d="M1126.1,352.4H1132.8" stroke="#6e8192" stroke-width="1.3"/><circle cx="1150.5" cy="350.3" r="4.6" fill="none" stroke="#008ffb" stroke-width="1.8"/><path d="M1153.9,353.7L1159.3,359.1" stroke="#008ffb" stroke-width="2.1"/><path d="M1148,350.3H1153M1150.5,347.8V352.8" stroke="#008ffb" stroke-width="1.2"/><path d="M1170.3,355.5 L1166.6,351.8 Q1166,351 1167,350.4 L1167.8,350.2 L1170.3,352.2 L1170.3,346.6 Q1170.3,345.6 1171.3,345.6 Q1172.3,345.6 1172.3,346.6 L1172.3,345.9 Q1172.3,345 1173.3,345 Q1174.3,345 1174.3,346 L1174.3,346.2 Q1174.3,345.3 1175.3,345.3 Q1176.3,345.3 1176.3,346.3 L1176.3,347 Q1176.3,346.3 1177.3,346.3 Q1179.6,346.3 1179.6,348 L1179.6,358 Q1179.6,359.3 1178.3,359.3 L1173,359.3 Z" fill="#fff" stroke="#8a8f94" stroke-width="1.1" stroke-linejoin="round"/><path d="M1171.3,346.5V352 M1173.3,346V352 M1175.3,346.2V352 M1177.4,347V352.5" stroke="#6e8192" stroke-width="1.3"/><path d="M1197.55,345.2 L1205.7,352.8 L1203.8,352.8 L1203.8,359.3 L1200.2,359.3 L1200.2,354.6 L1195.2,354.6 L1195.2,359.3 L1191.6,359.3 L1191.6,352.8 L1189.4,352.8 Z" fill="#5f798b"/><path d="M1210.1,348.3H1225M1210.1,352.6H1225M1210.1,356.9H1225" stroke="#647c8d" stroke-width="1.4"/></g><g transform="translate(0,586)"><circle cx="1109.35" cy="352.4" r="6.1" fill="none" stroke="#6e8192" stroke-width="1.3"/><path d="M1106.1,352.4H1112.6M1109.35,349.1V355.7" stroke="#6e8192" stroke-width="1.3"/><circle cx="1129.45" cy="352.4" r="6.1" fill="none" stroke="#6e8192" stroke-width="1.3"/><path d="M1126.1,352.4H1132.8" stroke="#6e8192" stroke-width="1.3"/><circle cx="1150.5" cy="350.3" r="4.6" fill="none" stroke="#008ffb" stroke-width="1.8"/><path d="M1153.9,353.7L1159.3,359.1" stroke="#008ffb" stroke-width="2.1"/><path d="M1148,350.3H1153M1150.5,347.8V352.8" stroke="#008ffb" stroke-width="1.2"/><path d="M1170.3,355.5 L1166.6,351.8 Q1166,351 1167,350.4 L1167.8,350.2 L1170.3,352.2 L1170.3,346.6 Q1170.3,345.6 1171.3,345.6 Q1172.3,345.6 1172.3,346.6 L1172.3,345.9 Q1172.3,345 1173.3,345 Q1174.3,345 1174.3,346 L1174.3,346.2 Q1174.3,345.3 1175.3,345.3 Q1176.3,345.3 1176.3,346.3 L1176.3,347 Q1176.3,346.3 1177.3,346.3 Q1179.6,346.3 1179.6,348 L1179.6,358 Q1179.6,359.3 1178.3,359.3 L1173,359.3 Z" fill="#fff" stroke="#8a8f94" stroke-width="1.1" stroke-linejoin="round"/><path d="M1171.3,346.5V352 M1173.3,346V352 M1175.3,346.2V352 M1177.4,347V352.5" stroke="#6e8192" stroke-width="1.3"/><path d="M1197.55,345.2 L1205.7,352.8 L1203.8,352.8 L1203.8,359.3 L1200.2,359.3 L1200.2,354.6 L1195.2,354.6 L1195.2,359.3 L1191.6,359.3 L1191.6,352.8 L1189.4,352.8 Z" fill="#5f798b"/><path d="M1210.1,348.3H1225M1210.1,352.6H1225M1210.1,356.9H1225" stroke="#647c8d" stroke-width="1.4"/></g></svg>
</body></html>
